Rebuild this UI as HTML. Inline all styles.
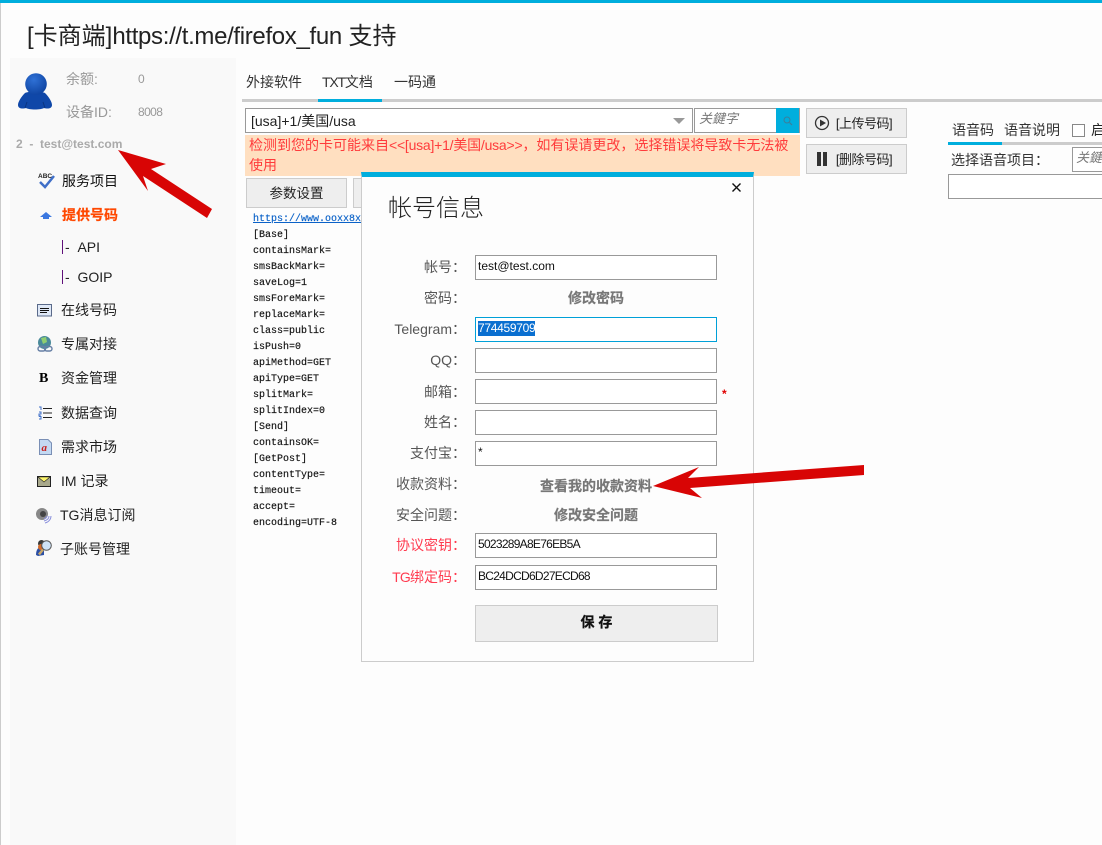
<!DOCTYPE html>
<html lang="zh"><head><meta charset="utf-8"><title>帐号信息</title>
<style>
html,body{margin:0;padding:0}
body{width:1102px;height:845px;overflow:hidden;background:#fdfdfd;position:relative;font-family:"Liberation Sans","Noto Sans CJK SC",sans-serif;color:#222}
.a,.t,.i,.l{position:absolute}
.t,.l{white-space:nowrap}
.t{line-height:20px;font-size:14px}
.l{left:378px;width:88px;text-align:right;font-size:14px;line-height:20px;color:#555}
.i{left:475px;width:242px;height:25px;box-sizing:border-box;border:1px solid #999;background:#fff;font-size:12px;line-height:21px;padding-left:2px;color:#111}
.n{letter-spacing:-.72px}
.b{font-weight:bold;-webkit-text-stroke:.2px}
.btn{position:absolute;box-sizing:border-box;background:#eee;border:1px solid #ccc;font-size:13.500px;text-align:center}
.ln{left:253px;font:10px/16px "Liberation Mono","Noto Sans CJK SC",monospace;color:#111;position:absolute;width:108px;overflow:hidden;white-space:nowrap;-webkit-text-stroke:.15px}
svg{position:absolute;overflow:visible}
</style></head><body>
<div class="a" style="left:0;top:0;width:1102px;height:3px;background:#00aedd"></div>
<div class="a" style="left:0;top:3px;width:1px;height:842px;background:#ccc"></div>
<div class="t" style="left:27px;top:21px;font-size:24px;line-height:32px;color:#222">[卡商端]<span style="letter-spacing:-.33px">https://t.me/firefox_fun</span> 支持</div>

<div class="a" style="left:10px;top:58px;width:226px;height:787px;background:#f9f9f9"></div>
<svg style="left:17px;top:73px" width="36" height="40" viewBox="0 0 36 40"><defs><radialGradient id="g" cx=".4" cy=".3" r=".8"><stop offset="0" stop-color="#2f71d6"/><stop offset="1" stop-color="#0b3f9c"/></radialGradient></defs><path d="M8 20 C12 18 24 18 28 20 C32 24 35 29 35 32 C35 36 30 36 27 35 C24 37 12 37 9 35 C6 36 1 36 1 32 C1 29 4 24 8 20Z" fill="#0f47a8"/><circle cx="19" cy="11" r="10.800" fill="url(#g)"/><path d="M8 35 L10 29 M26 29 L28 35" stroke="#0a3480" stroke-width="1" fill="none"/></svg>
<div class="t" style="left:66px;top:69px;color:#999">余额:</div>
<div class="t" style="left:138px;top:69px;color:#999;font-size:12px">0</div>
<div class="t" style="left:66px;top:102px;color:#999">设备ID:</div>
<div class="t" style="left:138px;top:102px;color:#999;font-size:12px;letter-spacing:-.6px">8008</div>
<div class="t" style="left:16px;top:134px;color:#aaa;font-size:12px;font-weight:bold">2 &nbsp;- &nbsp;test@test.com</div>

<svg style="left:38px;top:172px" width="18" height="18" viewBox="0 0 18 18"><text x="0" y="6" font-family="Liberation Sans" font-size="6.500" font-weight="bold" fill="#222">ABC</text><path d="M2 10 L7 15 L16 4" stroke="#3f6fc8" stroke-width="2.500" fill="none"/></svg>
<div class="t" style="left:62px;top:171px;color:#111">服务项目</div>
<svg style="left:40px;top:212px" width="12" height="7" viewBox="0 0 12 7"><path d="M6 0 L12 5 L9 5 L9 7 L3 7 L3 5 L0 5Z" fill="#3b78e0"/></svg>
<div class="t b" style="left:62px;top:205px;color:#ff4800">提供号码</div>
<div class="a" style="left:62px;top:240px;width:1px;height:14px;background:#60107a"></div>
<div class="t" style="left:65px;top:237px;color:#222">- &nbsp;API</div>
<div class="a" style="left:62px;top:270px;width:1px;height:14px;background:#60107a"></div>
<div class="t" style="left:65px;top:267px;color:#222">- &nbsp;GOIP</div>

<svg style="left:37px;top:304px" width="15" height="13" viewBox="0 0 15 13"><rect x=".5" y=".5" width="14" height="11.500" fill="#dfe8f6" stroke="#5a6a8a"/><path d="M3 4.500H12M3 6.500H12M3 8.500H10" stroke="#111" stroke-width="1"/></svg>
<div class="t" style="left:61px;top:300px">在线号码</div>
<svg style="left:37px;top:336px" width="16" height="16" viewBox="0 0 16 16"><circle cx="7.500" cy="6.500" r="6.500" fill="#4a8a9a"/><path d="M4 2 L9 1 L10 6 L6 8Z" fill="#8fce70"/><rect x="1" y="10.500" width="7.500" height="4.500" rx="2.200" fill="none" stroke="#667fa5" stroke-width="1.400"/><rect x="7.500" y="10.500" width="7.500" height="4.500" rx="2.200" fill="none" stroke="#667fa5" stroke-width="1.400"/></svg>
<div class="t" style="left:61px;top:334px">专属对接</div>
<div class="t" style="left:39px;top:369px;font:bold 14px/20px 'Liberation Serif',serif;color:#000">B</div>
<div class="t" style="left:61px;top:368px">资金管理</div>
<svg style="left:38px;top:406px" width="15" height="14" viewBox="0 0 15 14"><path d="M5 2.500H14M5 7H14M5 11.500H14" stroke="#222" stroke-width="1"/><path d="M1 1H3V4M1 6H3V8H1V10H3M1 10.500H3V13H1" stroke="#3f6fc8" stroke-width="1" fill="none"/></svg>
<div class="t" style="left:61px;top:403px">数据查询</div>
<svg style="left:39px;top:439px" width="13" height="16" viewBox="0 0 13 16"><path d="M.5 .5H9L12.500 4V15.500H.5Z" fill="#c4d9f2" stroke="#7a8fb5"/><text x="2.500" y="12" font-family="Liberation Serif" font-style="italic" font-weight="bold" font-size="11" fill="#c8201e">a</text></svg>
<div class="t" style="left:61px;top:437px">需求市场</div>
<svg style="left:37px;top:476px" width="14" height="11" viewBox="0 0 14 11"><rect x=".5" y=".5" width="13" height="10" fill="#a9a98c" stroke="#222"/><path d="M1 1 L7 6 L13 1Z" fill="#fdf56a" stroke="#222" stroke-width=".6"/></svg>
<div class="t" style="left:61px;top:471px">IM 记录</div>
<svg style="left:36px;top:508px" width="16" height="16" viewBox="0 0 16 16"><circle cx="6" cy="6" r="6" fill="#888"/><circle cx="7" cy="6" r="3" fill="#444"/><path d="M15 8 C15 11 13 14 9 15 M13 8 C13 10 12 12 8 13 M11 8 C11 9 10 10 8 11" stroke="#8a90dc" stroke-width="1" fill="none"/></svg>
<div class="t" style="left:60px;top:505px">TG消息订阅</div>
<svg style="left:36px;top:540px" width="16" height="16" viewBox="0 0 16 16"><circle cx="5.500" cy="3.500" r="3.500" fill="#3a3a3a"/><path d="M0 15 C0 9 3 6 8 7 L8 15 L2 16Z" fill="#2b4fa5"/><circle cx="5" cy="7" r="3" fill="#d26a2a"/><circle cx="10.500" cy="5.500" r="4.800" fill="#cfe3f7" stroke="#555"/><path d="M7 9.500 L3 14.500" stroke="#c8a86a" stroke-width="2.500"/></svg>
<div class="t" style="left:60px;top:539px">子账号管理</div>

<div class="t" style="left:246px;top:72px;color:#333">外接软件</div>
<div class="t" style="left:322px;top:72px;color:#333"><span style="letter-spacing:-1.200px">TXT</span>文档</div>
<div class="t" style="left:394px;top:72px;color:#333">一码通</div>
<div class="a" style="left:242px;top:99px;width:860px;height:3px;background:#ccc"></div>
<div class="a" style="left:318px;top:99px;width:64px;height:3px;background:#00aedd"></div>

<div class="a" style="left:245px;top:108px;width:448px;height:25px;box-sizing:border-box;border:1px solid #999;background:#fff"></div>
<div class="t" style="left:251px;top:111px;font-size:14px;color:#222">[usa]+1/美国/usa</div>
<div class="a" style="left:673px;top:118px;width:0;height:0;border-left:6px solid transparent;border-right:6px solid transparent;border-top:6px solid #999"></div>
<div class="a" style="left:694px;top:108px;width:106px;height:25px;box-sizing:border-box;border:1px solid #999;background:#fff"></div>
<div class="t" style="left:699px;top:109px;font-size:13px;font-style:italic;color:#777">关鍵字</div>
<div class="a" style="left:776px;top:108px;width:23px;height:25px;background:#00aedd"></div>
<svg style="left:783px;top:116px" width="10" height="10" viewBox="0 0 10 10"><circle cx="4" cy="4" r="3" fill="none" stroke="#3b7f9c" stroke-width="1"/><path d="M6.500 6.500 L9 9" stroke="#3b7f9c" stroke-width="1.200"/></svg>

<div class="a" style="left:245px;top:135px;width:555px;height:41px;background:#ffdfc0"></div>
<div class="t" style="left:249px;top:135px;color:#ff3b3b;width:550px;white-space:normal;line-height:20px">检测到您的卡可能来自<span style="letter-spacing:-.22px">&lt;&lt;[usa]+1/美国/usa&gt;&gt;</span>，如有误请更改，选择错误将导致卡无法被使用</div>

<div class="btn" style="left:806px;top:108px;width:101px;height:30px;line-height:29px;padding-left:15px;font-size:13px;letter-spacing:-.5px;color:#222">[上传号码]</div>
<svg style="left:814px;top:115px" width="16" height="16" viewBox="0 0 16 16"><circle cx="8" cy="8" r="6.500" fill="none" stroke="#333" stroke-width="1.300"/><path d="M6 4.500 L12 8 L6 11.500Z" fill="#333"/></svg>
<div class="btn" style="left:806px;top:144px;width:101px;height:30px;line-height:29px;padding-left:15px;font-size:13px;letter-spacing:-.5px;color:#222">[删除号码]</div>
<div class="a" style="left:817px;top:152px;width:4px;height:14px;background:#333"></div>
<div class="a" style="left:823px;top:152px;width:4px;height:14px;background:#333"></div>

<div class="btn" style="left:246px;top:178px;width:101px;height:30px;line-height:29px;color:#222">参数设置</div>
<div class="btn" style="left:353px;top:178px;width:20px;height:30px"></div>

<div class="ln" style="top:212px;color:#0b62c8;text-decoration:underline">https://www.ooxx8xx</div>
<div class="ln" style="top:228px">[Base]</div>
<div class="ln" style="top:244px">containsMark=</div>
<div class="ln" style="top:260px">smsBackMark=</div>
<div class="ln" style="top:276px">saveLog=1</div>
<div class="ln" style="top:292px">smsForeMark=</div>
<div class="ln" style="top:308px">replaceMark=</div>
<div class="ln" style="top:324px">class=public</div>
<div class="ln" style="top:340px">isPush=0</div>
<div class="ln" style="top:356px">apiMethod=GET</div>
<div class="ln" style="top:372px">apiType=GET</div>
<div class="ln" style="top:388px">splitMark=</div>
<div class="ln" style="top:404px">splitIndex=0</div>
<div class="ln" style="top:420px">[Send]</div>
<div class="ln" style="top:436px">containsOK=</div>
<div class="ln" style="top:452px">[GetPost]</div>
<div class="ln" style="top:468px">contentType=</div>
<div class="ln" style="top:484px">timeout=</div>
<div class="ln" style="top:500px">accept=</div>
<div class="ln" style="top:516px">encoding=UTF-8</div>

<div class="t" style="left:952px;top:120px;color:#333">语音码</div>
<div class="t" style="left:1004px;top:120px;color:#333">语音说明</div>
<div class="a" style="left:1072px;top:124px;width:13px;height:13px;box-sizing:border-box;border:1px solid #888;background:#fff"></div>
<div class="t" style="left:1091px;top:120px;color:#222">启</div>
<div class="a" style="left:948px;top:142px;width:154px;height:3px;background:#ccc"></div>
<div class="a" style="left:948px;top:142px;width:54px;height:3px;background:#00aedd"></div>
<div class="t" style="left:951px;top:150px;color:#333">选择语音项目：</div>
<div class="a" style="left:1072px;top:147px;width:40px;height:25px;box-sizing:border-box;border:1px solid #999;background:#fff"></div>
<div class="t" style="left:1076px;top:148px;font-size:13px;font-style:italic;color:#777">关鍵字</div>
<div class="a" style="left:948px;top:174px;width:160px;height:25px;box-sizing:border-box;border:1px solid #999;background:#fff"></div>

<div class="a" style="left:361px;top:172px;width:393px;height:490px;box-sizing:border-box;background:#fdfdfd;border:1px solid #ccc;border-top:5px solid #00aedd;border-left:1px solid #ccc"></div>
<svg style="left:732px;top:183px" width="9" height="9" viewBox="0 0 9 9"><path d="M.5 .5 L8.500 8.500 M8.500 .5 L.5 8.500" stroke="#111" stroke-width="1.400"/></svg>
<div class="t" style="left:388px;top:193px;font-size:24px;line-height:32px;color:#222;font-weight:300">帐号信息</div>

<div class="l" style="top:257px">帐号：</div>
<div class="i" style="top:255px">test@test.com</div>
<div class="l" style="top:288px">密码：</div>
<div class="t b" style="left:475px;width:242px;top:288px;font-size:14px;text-align:center;color:#777">修改密码</div>
<div class="l" style="top:319px">Telegram：</div>
<div class="i" style="top:317px;border-color:#00a0d8"><span style="background:#0a6fd0;color:#fff;display:inline-block;line-height:15px;letter-spacing:-.3px">774459709</span></div>
<div class="l" style="top:350px">QQ：</div>
<div class="i" style="top:348px"></div>
<div class="l" style="top:382px">邮箱：</div>
<div class="i" style="top:379px"></div>
<div class="t" style="left:722px;top:384px;font-size:12px;font-weight:bold;color:#e00000">*</div>
<div class="l" style="top:412px">姓名：</div>
<div class="i" style="top:410px"></div>
<div class="l" style="top:443px">支付宝：</div>
<div class="i" style="top:441px">*</div>
<div class="l" style="top:474px">收款资料：</div>
<div class="t b" style="left:475px;width:242px;top:476px;font-size:14px;text-align:center;color:#777">查看我的收款资料</div>
<div class="l" style="top:505px">安全问题：</div>
<div class="t b" style="left:475px;width:242px;top:505px;font-size:14px;text-align:center;color:#777">修改安全问题</div>
<div class="l" style="top:535px;color:#ff3b50">协议密钥：</div>
<div class="i n" style="top:533px">5023289A8E76EB5A</div>
<div class="l" style="top:567px;color:#ff3b50"><span style="letter-spacing:-.8px">TG</span>绑定码：</div>
<div class="i n" style="top:565px">BC24DCD6D27ECD68</div>
<div class="btn" style="left:475px;top:605px;width:243px;height:37px;line-height:33px;font-size:14px;font-weight:bold;color:#111;-webkit-text-stroke:.3px">保 存</div>

<svg style="left:0;top:0" width="1102" height="845" viewBox="0 0 1102 845"><polygon points="118,150 166,164 151,169 212,209 207,218 143,176 148,191" fill="#d80505"/><polygon points="653,486 699,467 688,478 864,465 864,475 690,488 702,498" fill="#d80505"/></svg>
</body></html>
